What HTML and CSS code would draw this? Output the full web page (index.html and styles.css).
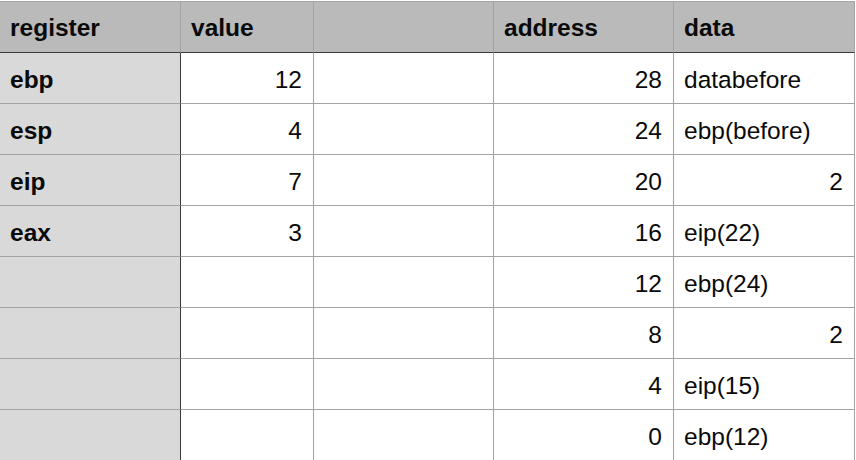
FILE: index.html
```html
<!DOCTYPE html>
<html>
<head>
<meta charset="utf-8">
<link rel="stylesheet" href="styles.css">
</head>
<body>
<div class="sheet">
  <div class="cell head">register</div>
  <div class="cell head">value</div>
  <div class="cell head"></div>
  <div class="cell head">address</div>
  <div class="cell head">data</div>

  <div class="cell label">ebp</div>
  <div class="cell num">12</div>
  <div class="cell"></div>
  <div class="cell num">28</div>
  <div class="cell txt">databefore</div>

  <div class="cell label">esp</div>
  <div class="cell num">4</div>
  <div class="cell"></div>
  <div class="cell num">24</div>
  <div class="cell txt">ebp(before)</div>

  <div class="cell label">eip</div>
  <div class="cell num">7</div>
  <div class="cell"></div>
  <div class="cell num">20</div>
  <div class="cell num">2</div>

  <div class="cell label">eax</div>
  <div class="cell num">3</div>
  <div class="cell"></div>
  <div class="cell num">16</div>
  <div class="cell txt">eip(22)</div>

  <div class="cell label"></div>
  <div class="cell num"></div>
  <div class="cell"></div>
  <div class="cell num">12</div>
  <div class="cell txt">ebp(24)</div>

  <div class="cell label"></div>
  <div class="cell num"></div>
  <div class="cell"></div>
  <div class="cell num">8</div>
  <div class="cell num">2</div>

  <div class="cell label"></div>
  <div class="cell num"></div>
  <div class="cell"></div>
  <div class="cell num">4</div>
  <div class="cell txt">eip(15)</div>

  <div class="cell label"></div>
  <div class="cell num"></div>
  <div class="cell"></div>
  <div class="cell num">0</div>
  <div class="cell txt">ebp(12)</div>
</div>
</body>
</html>
```
FILE: styles.css
```css
html, body {
  margin: 0;
  padding: 0;
  background: #ffffff;
}
body {
  font-family: "Liberation Sans", Arial, sans-serif;
  color: #0a0a0a;
  overflow: hidden;
}
.sheet {
  margin-top: 1px;
  width: 855px;
  border-top: 1px solid #a6a6a6;
  display: grid;
  grid-template-columns: 181px 133px 180px 180px 181px;
  grid-auto-rows: 51px;
  grid-template-rows: 51px;
}
.cell {
  box-sizing: border-box;
  border-right: 1px solid #a3a3a3;
  border-bottom: 1px solid #a3a3a3;
  display: flex;
  align-items: center;
  padding: 3px 11px 0 10px;
  font-size: 24.5px;
  white-space: nowrap;
}
.head {
  background: #b9bab9;
  font-weight: bold;
  border-bottom-color: #3a3a3a;
  padding-top: 2px;
}
.label {
  background: #d9d9d9;
  font-weight: bold;
  border-right-color: #3a3a3a;
}
.num {
  justify-content: flex-end;
}
.txt {
  justify-content: flex-start;
}
```
